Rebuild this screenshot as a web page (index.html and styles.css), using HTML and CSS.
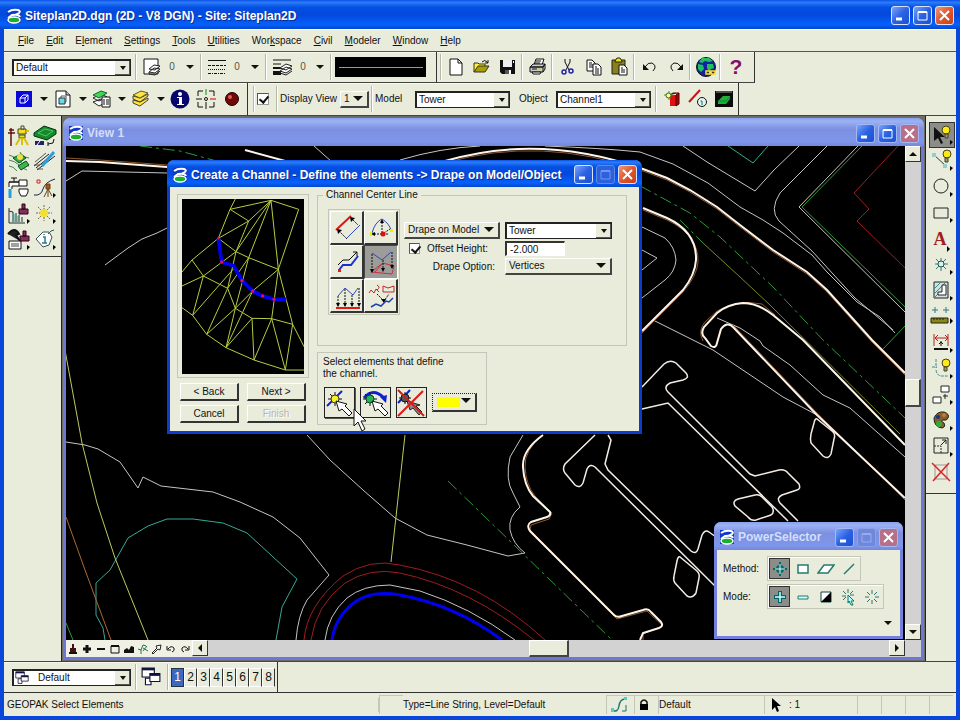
FILE: index.html
```
<!DOCTYPE html>
<html lang="en">
<head>
    <meta charset="UTF-8">
    <meta name="viewport" content="width=device-width, initial-scale=1.0">
    <title>Siteplan2D.dgn (2D - V8 DGN) - Site: Siteplan2D</title>
    <link rel="stylesheet" href="styles.css">
</head>
<body>
    <!-- Shared symbols -->
    <svg class="defs" aria-hidden="true">
        <symbol id="logo" viewBox="0 0 16 16">
            <path d="M1 1h14v14H1z" fill="#1238c8"/>
            <path d="M2 4Q6 1 12 2Q15 3 13 5Q10 7 6 7L2 10M7 7Q13 6 14 9" fill="none" stroke="#fff" stroke-width="2"/>
            <ellipse cx="8" cy="12" rx="6" ry="3" fill="#18b028" stroke="#fff" stroke-width="1.5"/>
        </symbol>
        <symbol id="min" viewBox="0 0 17 17"><path d="M4 12h6" stroke="#fff" stroke-width="3"/></symbol>
        <symbol id="max" viewBox="0 0 17 17"><path d="M4 5h9v8H4z" fill="none" stroke="currentColor"/><path d="M4 5h9" stroke="currentColor" stroke-width="2"/></symbol>
        <symbol id="close" viewBox="0 0 17 17"><path d="M4 4l9 9M13 4l-9 9" stroke="#fff" stroke-width="2"/></symbol>
        <symbol id="sheets" viewBox="0 0 18 18">
            <path d="M1 1h11v8H1z" fill="#fff" stroke="#113"/><path d="M1 2h11" stroke="#114" stroke-width="2"/>
            <path d="M4 10h5v6H4z" fill="#fff" stroke="#113"/>
            <path d="M8 6h9v7H8z" fill="#fff" stroke="#113"/><path d="M8 7h9" stroke="#114" stroke-width="2"/>
        </symbol>
        <symbol id="hand" viewBox="0 0 28 28"><path d="M11 12L14 22L17 20L24 27L27 24L20 17L22 15Z" fill="#fff" stroke="#111"/></symbol>
    </svg>

    <div class="app">
        <header class="titlebar">
            <svg class="logo"><use href="#logo"/></svg>
            <h1>Siteplan2D.dgn (2D - V8 DGN) - Site: Siteplan2D</h1>
            <div class="winbtns">
                <button aria-label="Minimize"><svg><use href="#min"/></svg></button>
                <button aria-label="Maximize"><svg><use href="#max"/></svg></button>
                <button class="close" aria-label="Close"><svg><use href="#close"/></svg></button>
            </div>
        </header>

        <nav class="menubar">
            <button><u>F</u>ile</button>
            <button><u>E</u>dit</button>
            <button>E<u>l</u>ement</button>
            <button><u>S</u>ettings</button>
            <button><u>T</u>ools</button>
            <button><u>U</u>tilities</button>
            <button>Wor<u>k</u>space</button>
            <button><u>C</u>ivil</button>
            <button><u>M</u>odeler</button>
            <button><u>W</u>indow</button>
            <button><u>H</u>elp</button>
        </nav>

        <div class="toolrow">
            <div class="toolbar attributes">
                <span class="combo level"><select aria-label="Active level"><option>Default</option></select></span>
                <i class="sep"></i>
                <button class="drop">
                    <svg width="18" height="18"><path d="M1 1h14v15H1z" fill="#fff" stroke="#111"/><path d="M6 14l5-4 6 1-5 4zM6 11l5-4 6 1-5 4z" fill="#fff" stroke="#222"/><path d="M6 14v2l6 1 5-4" fill="none" stroke="#222"/></svg>
                    <span>0</span><b class="arrow"></b>
                </button>
                <i class="sep"></i>
                <button class="drop">
                    <svg width="18" height="18" stroke="#111"><path d="M0 2.5h18"/><path d="M0 7.5h18" stroke-dasharray="3 1"/><path d="M0 11.5h18" stroke-dasharray="1 1"/><path d="M0 15.5h18" stroke-dasharray="3 1 1 1"/></svg>
                    <span>0</span><b class="arrow"></b>
                </button>
                <i class="sep"></i>
                <button class="drop">
                    <svg width="20" height="18"><path d="M0 2h18M0 6h8" stroke="#111"/><path d="M0 10h8" stroke="#111" stroke-width="2"/><path d="M0 15h8" stroke="#111" stroke-width="4"/><path d="M7 13l6-4 6 2-6 4zM7 10l6-4 6 2-6 4z" fill="#fff" stroke="#222"/><path d="M7 13v2l6 2 6-4" fill="none" stroke="#222"/></svg>
                    <span>0</span><b class="arrow"></b>
                </button>
                <i class="sep"></i>
                <div class="preview"></div>
            </div>
            <div class="toolbar standard">
                <i class="grip"></i>
                <button class="tool" aria-label="New"><svg width="16" height="18"><path d="M2 1h8l4 4v12H2z" fill="#fff" stroke="#111"/><path d="M10 1v4h4" fill="none" stroke="#111"/></svg></button>
                <button class="tool" aria-label="Open"><svg width="18" height="16"><path d="M1 13V4h4l1 1h6v3" fill="#ffee40" stroke="#332"/><path d="M1 13l4-6h11l-4 6z" fill="#a8a000" stroke="#332"/><path d="M9 3q3-3 5 0l1 1M15 1v3h-3" fill="none" stroke="#111"/></svg></button>
                <button class="tool" aria-label="Save"><svg width="18" height="16"><path d="M1 1h15v14H3l-2-2z" fill="#111"/><path d="M4 1h9v7H4z" fill="#eee"/><path d="M6 11h6v4H6z" fill="#555"/><path d="M10 11h2v4h-2z" fill="#fff"/><path d="M14 2h1v2h-1z" fill="#fff"/></svg></button>
                <i class="sep"></i>
                <button class="tool" aria-label="Print"><svg width="18" height="18"><path d="M5 7l2-6h8l-2 6" fill="#fff" stroke="#111"/><path d="M1 9l3-3h12l-2 3zM1 9h13v5H1zM14 9l2-3v5l-2 3" fill="#ccc" stroke="#111"/><path d="M3 14h9l-1 2H4zM7 3h5M6 5h5M3 11h5" stroke="#111" fill="#fff"/><path d="M9 11h3" stroke="#cc0"/></svg></button>
                <i class="sep"></i>
                <button class="tool" aria-label="Cut"><svg width="14" height="18" fill="none"><path d="M4 1v3l4 8M9 1v3l-4 8" stroke="#111"/><circle cx="3" cy="14" r="2" stroke="#22a" stroke-width="1.5"/><circle cx="10" cy="13" r="2" stroke="#22a" stroke-width="1.5"/></svg></button>
                <button class="tool" aria-label="Copy"><svg width="16" height="18"><path d="M1 2h5l3 3v8H1z" fill="#fff" stroke="#111"/><path d="M3 5h3M3 7h4M3 9h4" stroke="#111"/><path d="M7 6h5l3 3v8H7z" fill="#fff" stroke="#111"/><path d="M9 9h2M9 11h4M9 13h4M9 15h4" stroke="#111"/></svg></button>
                <button class="tool" aria-label="Paste"><svg width="18" height="20"><path d="M1 3h13v14H1z" fill="#888020" stroke="#221"/><path d="M4 4l2-3h3l2 3v1H4z" fill="#e8e020" stroke="#221"/><path d="M8 8h5l3 3v7H8z" fill="#fff" stroke="#111"/><path d="M10 11h2M10 13h4M10 15h4" stroke="#111"/></svg></button>
                <i class="sep"></i>
                <button class="tool" aria-label="Undo"><svg width="16" height="14"><path d="M3 7Q6 2 10 3Q14 5 13 8L11 11" fill="none" stroke="#111"/><path d="M1 4v6h6z" fill="#111"/></svg></button>
                <button class="tool" aria-label="Redo"><svg width="16" height="14"><path d="M13 7Q10 2 6 3Q2 5 3 8L5 11" fill="none" stroke="#111"/><path d="M15 4v6H9z" fill="#111"/></svg></button>
                <i class="sep"></i>
                <button class="tool" aria-label="Connect Web"><svg width="22" height="22"><circle cx="11" cy="11" r="9.5" fill="#1420a0" stroke="#112"/><path d="M7 2l7 0 4 3-4 1-4-1-3 2-3-1zM3 8l5 1 1 4-3 3-3-3zM12 8h6l1 4-3 1-2 3-2-4z" fill="#20c060"/><path d="M11 15h4v3h-4zM16 15h4v3h-4zM14 17h3" fill="#333" stroke="#ffe020" stroke-width="1.5"/></svg></button>
                <i class="sep"></i>
                <button class="tool help" aria-label="Help">?</button>
            </div>
        </div>

        <div class="toolrow second">
            <div class="toolbar primary">
                <button class="tool" aria-label="Models"><svg width="18" height="18"><path d="M1 1h16v16H1z" fill="#0808d8"/><path d="M5 8h5v5H5zM8 5h5v5M5 8l3-3M10 8l3-3M10 13l3-3" fill="none" stroke="#fff"/></svg></button><b class="arrow"></b>
                <button class="tool" aria-label="References"><svg width="18" height="20"><path d="M2 2h10l4 4v12H2z" fill="#fff" stroke="#111"/><path d="M12 2v4h4" fill="#ccc" stroke="#111"/><path d="M7 7h5v6H7z" fill="#fff" stroke="#555"/><path d="M5 9h6v6H5z" fill="#60e0e0" stroke="#333"/></svg></button><b class="arrow"></b>
                <button class="tool" aria-label="Level Manager"><svg width="22" height="20"><path d="M2 13l8-3 6 3-8 4zM2 9l8-4 6 3-8 4z" fill="#fff" stroke="#222"/><path d="M2 6l8-4 6 2-8 5z" fill="#40d850" stroke="#163"/><path d="M11 8h8v10h-8z" fill="#fff" stroke="#111"/><path d="M12 11h2M15 11h3M12 13h2M15 13h3M12 15h2M15 15h3" stroke="#111"/></svg></button><b class="arrow"></b>
                <button class="tool" aria-label="Level Display"><svg width="18" height="20"><path d="M1 14l7 3 8-6v-2l-8 4-7-2zM1 10l7 3 8-6V5l-8 4-7-2z" fill="#ffe440" stroke="#443"/><path d="M1 6l8-4 7 2-8 5z" fill="#ffe440" stroke="#553"/></svg></button><b class="arrow"></b>
                <button class="tool" aria-label="Element Information"><svg width="22" height="22"><circle cx="11" cy="11" r="9.5" fill="#08086c"/><path d="M8 9h5v7h2v1H8v-1h2v-6H8V9z" fill="#fff"/><circle cx="11" cy="6" r="2" fill="#fff"/></svg></button>
                <button class="tool" aria-label="AccuDraw"><svg width="22" height="22" fill="none" stroke="#111"><path d="M3 8V3h5M14 3h5v5M19 14v5h-5M8 19H3v-5"/><path d="M11 14v7M1 11h6"/><path d="M11 1v6" stroke="#181"/><path d="M15 11h6" stroke="#c00"/><circle cx="11" cy="11" r="1.5"/></svg></button>
                <button class="tool" aria-label="Record"><svg width="16" height="16"><circle cx="8" cy="8" r="6.5" fill="#700808" stroke="#200"/><circle cx="6" cy="6" r="2" fill="#e06050"/></svg></button>
            </div>
            <div class="toolbar object">
                <i class="grip"></i>
                <input type="checkbox" id="display" class="check" checked>
                <i class="sep"></i>
                <label for="display">Display View</label>
                <span class="menu viewno"><select aria-label="View number"><option>1</option></select></span>
                <i class="sep"></i>
                <label for="model" class="model-label">Model</label>
                <span class="combo short"><select id="model"><option>Tower</option></select></span>
                <label for="object" class="object-label">Object</label>
                <span class="combo short"><select id="object"><option>Channel1</option></select></span>
                <i class="sep"></i>
                <button class="tool" aria-label="Edit object"><svg width="18" height="18"><path d="M7 5h6v11H7z" fill="#e01010"/><path d="M13 5l3-2v11l-3 2zM7 5l3-2h6" fill="#a00808" stroke="#500"/><path d="M6 1v9M1 5h9" stroke="#585"/><circle cx="5.5" cy="5.5" r="2.5" fill="#ff6" stroke="#363"/></svg></button>
                <button class="tool" aria-label="Line information"><svg width="20" height="20"><path d="M1 13L12 1" stroke="#c01818" stroke-width="2"/><circle cx="14" cy="13" r="4.5" fill="#e4f4ee" stroke="#111"/><path d="M12.5 12H14v4" fill="none" stroke="#176"/></svg></button>
                <button class="tool" aria-label="Triangles"><svg width="18" height="18"><path d="M0 1h18v16H0z" fill="#0a0a0a"/><path d="M1 2h16" stroke="#999"/><path d="M3 11l5-5h7v3l-4 5H3z" fill="#20b030"/><path d="M3 11h8l4-4" fill="none" stroke="#084"/></svg></button>
            </div>
        </div>

        <main>
            <aside class="toolbox left">
                <button class="tool" aria-label="Survey"><svg width="22" height="22"><path d="M3 3v18M1 5h5M0 8h7" stroke="#611" stroke-width="1.5"/><path d="M10 4h8v5h-8zM11 10h6v3h-6z" fill="#f0e020" stroke="#442"/><path d="M13 1h3v3h-3z" fill="#eee" stroke="#442"/><path d="M14 13v7M12 13l-4 7M16 13l4 7M18 6h3" stroke="#d8c010" stroke-width="2"/></svg></button>
                <button class="tool" aria-label="DTM"><svg width="24" height="24"><path d="M1 9L11 2l12 4v4l-9 6L1 12z" fill="#18882c" stroke="#031"/><path d="M5 9l7-4 8 2-7 5z" fill="none" stroke="#4c6" /><path d="M2 17h9v4H2z" fill="#226"/><path d="M4 21l3-4" stroke="#fff"/><path d="M15 20l5-1 1-4M15 18v4" fill="none" stroke="#111"/></svg></button>
                <button class="tool" aria-label="Site"><svg width="22" height="22"><path d="M1 4q5 1 10 6t10 5M1 9q6 1 10 5t8 5M1 15q4 0 8 5M12 1q2 5 9 6" fill="none" stroke="#485"/><path d="M5 7l8-4 5 4-7 5z" fill="#30b040" stroke="#142"/><path d="M10 15l8-5 3 4-8 5z" fill="#38b848" stroke="#142"/><circle cx="12" cy="6" r="3" fill="#f0e048"/></svg></button>
                <button class="tool" aria-label="Road"><svg width="24" height="24"><path d="M1 16L16 4M4 20L22 6M3 18L20 4" stroke="#222"/><path d="M9 16L21 2" stroke="#28a0e0" stroke-width="3"/><path d="M2 12L13 3M1 15h6M4 19h6" stroke="#555"/></svg></button>
                <button class="tool" aria-label="Water"><svg width="24" height="24"><path d="M2 11V6h10v-2h8v6h-8M4 2h6M7 2v4M2 6h10v4H5v3" fill="#fff" stroke="#111"/><path d="M3 13v9" stroke="#20a0e0" stroke-width="3"/><path d="M12 13h9v3l-2 4h-5l-2-4z" fill="#fff" stroke="#111"/></svg></button>
                <button class="tool" aria-label="Geometry"><svg width="24" height="24"><path d="M1 19q7 1 9-6t12-10" fill="none" stroke="#224"/><path d="M4 4h3v3H4z" fill="none" stroke="#c22"/><path d="M13 8h4v5h-4zM15 13v8M15 13l-4 8M15 13l4 7" fill="#a50" stroke="#642"/><path d="M20 17l3 2-3 3z"/></svg></button>
                <button class="tool" aria-label="Quantities"><svg width="24" height="24"><path d="M2 6v15h16M2 9l4 1v10M9 11v9M12 13v7M15 15v5" fill="none" stroke="#233"/><path d="M7 12v8M11 14v6" stroke="#2aa"/><path d="M15 2h3v5h-3zM12 7h9v5h-9z" fill="#803060" stroke="#301"/><path d="M20 17l3 2-3 3z"/></svg></button>
                <button class="tool" aria-label="Flash"><svg width="24" height="24"><path d="M11 3v16M3 11h16M5 5l12 12M17 5L5 17" stroke="#764" stroke-dasharray="2 1"/><circle cx="11" cy="11" r="4" fill="#f0e030"/><path d="M20 17l3 2-3 3z"/></svg></button>
                <button class="tool" aria-label="Build"><svg width="24" height="24"><path d="M1 6q7-8 11 0l-3 1 4 6" fill="#222" stroke="#111" stroke-width="2"/><path d="M2 13h12v8H2z" fill="#fff" stroke="#111"/><path d="M4 16h8M4 18h8" stroke="#444"/><path d="M16 3h3v5h-3zM13 8h9v5h-9z" fill="#803060" stroke="#301"/><path d="M20 17l3 2-3 3z"/></svg></button>
                <button class="tool" aria-label="Tag"><svg width="24" height="24"><path d="M3 11l7-7h6l3 5-3 8-6 2z" fill="#fff" stroke="#355"/><path d="M15 6q3-4 6-4" fill="none" stroke="#355"/><path d="M10 9h2v6M9 15h5M11 6v1" fill="none" stroke="#2a7a90" stroke-width="1.5"/><path d="M20 17l3 2-3 3z"/></svg></button>
            </aside>

            <div class="workspace">
                <section class="view">
                    <header class="titlebar inactive">
                        <svg class="logo"><use href="#logo"/></svg>
                        <h2>View 1</h2>
                        <div class="winbtns">
                            <button aria-label="Minimize"><svg><use href="#min"/></svg></button>
                            <button aria-label="Maximize"><svg><use href="#max"/></svg></button>
                            <button class="close" aria-label="Close"><svg><use href="#close"/></svg></button>
                        </div>
                    </header>
                    <div class="drawing">
                        <svg viewBox="66 146 839 494" preserveAspectRatio="xMinYMin slice">
                            <!-- contours -->
                            <g class="white">
                                <path d="M66 181L82 171L167 173"/>
                                <path d="M105 265L128 248L142 239L157 233L167 228"/>
                                <path d="M314 146L332 162"/>
                                <path d="M400 160Q440 148 480 146M545 146Q600 148 640 152L673 164L708 183L740 207L763 220L783 233L812 255L827 272L857 302L880 317L895 333"/>
                                <path d="M683 146L707 162L755 191L774 170L799 146"/>
                                <path d="M827 146L780 193Q769 210 779 221L812 251L855 298L893 330"/>
                                <path d="M858 146L799 207L905 312"/>
                                <path d="M642 227L665 238Q675 247 676 260Q675 272 665 280L642 298"/>
                                <path d="M642 250L657 258L642 270"/>
                                <path d="M653 320L713 350L783 397L817 415"/>
                                <path d="M717 318L740 328L760 341L763 346L790 365L823 395L850 408L905 457"/>
                                <path d="M523 435L510 457Q505 480 513 493L520 507Q508 517 510 530Q513 544 525 553L508 556L467 545L427 535L395 518L363 490L330 460L307 435"/>
                                <path d="M66 442L85 445L98 449L120 462L138 488L143 477L161 486L213 492L240 502L273 517L300 538L329 575L307 600Q298 615 296 640"/>
                                <path d="M325 640Q328 615 347 598Q363 585 390 585L420 591Q470 607 515 640"/>
                            </g>
                            <g class="teal">
                                <path d="M728 146L753 163L768 146"/>
                                <path d="M105 640L103 628L96 615V583L110 570L128 538L148 526L167 519H193L223 523L247 533L297 579L282 607L276 640"/>
                            </g>
                            <g class="green">
                                <path d="M862 146L802 207L905 307M905 326L883 349M66 623L73 640"/>
                                <path class="dash" d="M140 146L180 151L220 162M448 481L612 640"/>
                                <path class="dash" d="M620 175L690 213L720 237L773 287L823 340L905 418"/>
                                <path class="dash" d="M680 220L703 243"/>
                            </g>
                            <path class="red" d="M898 146L854 193L869 209L857 221L905 268"/>
                            <path class="red" d="M304 640Q307 605 343 576Q370 558 400 565Q480 580 545 640M311 640Q316 605 345 583Q370 567 400 573Q470 588 534 640"/>
                            <path class="olive" d="M703 243L740 277L770 305L900 434"/>
                            <path class="yellow" d="M65 350L82 443L97 503L115 558L148 640M405 435L391 562"/>
                            <path class="orange" d="M66 517L85 570L111 640"/>
                            <path class="blue" d="M332 640Q335 617 355 602Q372 590 400 595Q455 605 502 640"/>
                            <!-- road edges -->
                            <g class="brown">
                                <path d="M66 158L100 160L167 165L290 163"/>
                                <path d="M445 163Q540 135 643 171L667 180L690 192L717 209L740 227L773 252L807 274L827 292L872 342L905 375"/>
                                <path d="M643 210L667 220Q699 235 698 262Q697 276 683 292L642 333"/>
                                <path d="M703 341Q697 330 706 321L717 311Q737 299 762 304L775 315"/>
                                <path d="M543 435Q524 450 525 467Q526 485 535 496L552 513L549 519L531 525L530 530L617 619L647 611L663 626L643 634V640"/>
                                <path d="M733 325L817 413L905 500"/>
                            </g>
                            <g class="road">
                                <path d="M66 161L100 162L167 167M245 150L300 165"/>
                                <path d="M445 161Q540 133 643 169L667 178L690 190L717 207L740 225L773 250L807 272L827 290L872 340L905 373"/>
                                <path d="M643 208L667 218Q697 232 696 260Q695 275 683 290L642 331"/>
                                <path d="M905 445L803 340L773 315Q758 303 743 303Q728 304 717 313L704 327Q700 334 705 338L711 346Q716 349 717 343L721 329Q727 321 733 327L817 415L905 498"/>
                                <path d="M543 435Q522 450 523 467Q524 485 533 496L550 512Q551 516 547 517L531 522Q526 525 530 531L614 615Q617 618 622 616L643 610Q648 608 651 612L661 622Q664 626 659 628L643 633L640 640"/>
                            </g>
                            <!-- buildings -->
                            <g class="building">
                                <path d="M642 387L664 364Q670 359 676 363L686 373Q690 378 683 380L670 383Q663 387 668 392L750 474L755 476L779 470Q785 469 788 473L799 484Q801 489 797 490L782 495Q776 498 780 503L798 521"/>
                                <path d="M642 409L668 403L788 521"/>
                                <path d="M817 419L832 431Q836 434 834 439L831 454Q828 460 823 456L811 443Q810 439 811 434L814 423Q815 418 817 419Z"/>
                                <path d="M738 499L755 495Q759 494 762 497L772 507Q775 512 771 515L756 520Q751 521 748 517L735 506Q732 501 738 499Z"/>
                                <path d="M680 557L697 571Q700 574 699 578L696 593Q692 599 687 596L675 583Q673 580 674 576L677 561Q678 556 680 557Z"/>
                                <path d="M595 435L565 464Q562 469 565 473L575 485Q580 489 583 483L587 469Q590 463 595 467L715 586"/>
                                <path d="M608 435L611 440L605 464L608 470L691 551Q696 555 698 549L702 535Q705 529 709 532L716 537"/>
                            </g>
                        </svg>
                    </div>
                    <div class="vscroll">
                        <button class="sb up" aria-label="Scroll up"></button>
                        <i class="thumb"></i>
                        <button class="sb down" aria-label="Scroll down"></button>
                    </div>
                    <div class="hscroll">
                        <div class="viewtools">
                            <button aria-label="Update view"><svg width="12" height="12"><path d="M5 1h2v4h2v6H3V5h2z" fill="#411"/><path d="M2 10h8" stroke="#111" stroke-width="2"/></svg></button>
                            <button aria-label="Zoom in"><svg width="12" height="12"><path d="M6 2v8M2 6h8" stroke="#111" stroke-width="3"/></svg></button>
                            <button aria-label="Zoom out"><svg width="12" height="12"><path d="M2 6h8" stroke="#111" stroke-width="2"/></svg></button>
                            <button aria-label="Window area"><svg width="12" height="12"><path d="M2 3h8v7H2z" fill="none" stroke="#111"/><path d="M2 3h8" stroke="#111" stroke-width="2"/></svg></button>
                            <button aria-label="Fit view"><svg width="12" height="12"><path d="M1 10V7l3-2 2 2 2-4 3 1v6z" fill="#111"/></svg></button>
                            <button aria-label="Rotate view"><svg width="12" height="12"><path d="M1 6l3 1v4M4 7l2-5 3 1M6 8l4-5M6 5l5 3" fill="none" stroke="#187858"/></svg></button>
                            <button aria-label="Pan view"><svg width="12" height="12"><path d="M1 10l5-5-1-2 5-1-1 5-2-1-5 5z" fill="#fff" stroke="#222"/></svg></button>
                            <button aria-label="View previous"><svg width="12" height="12"><path d="M3 6q3-4 6-1 1 3-2 4M2 3v4h4" fill="none" stroke="#111"/></svg></button>
                            <button aria-label="View next"><svg width="12" height="12"><path d="M9 6Q6 2 3 5 2 8 5 9M10 3v4H6" fill="none" stroke="#111"/></svg></button>
                        </div>
                        <button class="sb prev" aria-label="Scroll left"></button>
                        <i class="thumb"></i>
                        <button class="sb next" aria-label="Scroll right"></button>
                    </div>
                </section>

                <section class="window channel">
                    <header class="titlebar">
                        <svg class="logo"><use href="#logo"/></svg>
                        <h2>Create a Channel - Define the elements -&gt; Drape on Model/Object</h2>
                        <div class="winbtns">
                            <button aria-label="Minimize"><svg><use href="#min"/></svg></button>
                            <button class="off" aria-label="Maximize" disabled><svg><use href="#max"/></svg></button>
                            <button class="close" aria-label="Close"><svg><use href="#close"/></svg></button>
                        </div>
                    </header>
                    <div class="channel-body">
                        <div class="wizard">
                            <div class="frame">
                                <svg viewBox="48 129 366 525">
                                    <g fill="none" stroke="#b8cc40" stroke-width="3">
                                        <path d="M208 129L192 160L157 247L78 312L48 348M192 160L315 133L398 160L337 340L315 133M192 160L248 195L157 247L210 287L248 195L315 133L210 287M315 133L248 305L210 287L112 360L78 312M112 360L48 390M112 360L80 478L48 455M80 478L122 535L180 575L264 612L358 642H414"/>
                                        <path d="M157 247L167 318M248 305L337 340L260 405L180 575M337 340L317 488L380 505L337 340M380 505L414 572M380 505L358 642L317 488L264 612L258 487L317 488M258 487L208 457L185 397L112 360M210 287L185 397L122 535L208 457L260 405M248 305L185 397M258 487L180 575M208 457L180 575M248 305L208 457M80 478L210 330"/>
                                    </g>
                                    <path d="M157 247L167 318L203 329L228 374L260 405L290 420L324 430H361" fill="none" stroke="#0000f0" stroke-width="11"/>
                                    <g fill="#e01040"><circle cx="157" cy="247" r="4"/><circle cx="167" cy="318" r="5"/><circle cx="228" cy="374" r="5"/><circle cx="260" cy="405" r="5"/><circle cx="290" cy="420" r="5"/><circle cx="324" cy="430" r="5"/></g>
                                </svg>
                            </div>
                            <div class="nav">
                                <button class="push">&lt; Back</button>
                                <button class="push">Next &gt;</button>
                                <button class="push">Cancel</button>
                                <button class="push" disabled>Finish</button>
                            </div>
                        </div>
                        <div class="options">
                            <fieldset class="centerline">
                                <legend>Channel Center Line</legend>
                                <div class="methods">
                                    <button aria-label="Parallel"><svg width="28" height="28"><path d="M3 16L18 2" stroke="#d81818" stroke-width="2"/><path d="M13 25L27 11" stroke="#3048c0"/><path d="M6 17l8 8M18 4l7 7" stroke="#111" stroke-dasharray="2 1"/><path d="M4 15l5 1-4 4zM17 3l5 1-4 4z"/></svg></button>
                                    <button aria-label="Arc"><svg width="28" height="28"><path d="M5 19Q8 8 15 5Q22 9 25 18" fill="none" stroke="#3048c0"/><path d="M15 8v12M7 20h14M17 19l6-4" stroke="#111" stroke-dasharray="2 1"/><path d="M13 9l2-4 2 4zM8 18v4l-4-2z"/><path d="M3 18h2v4H3zM23 15h3v3h-3z" fill="#ee0"/><circle cx="16" cy="20" r="2.5" fill="#e01010"/></svg></button>
                                    <button aria-label="Offset"><svg width="28" height="28"><path d="M6 22l4-5h8l7-9" fill="none" stroke="#1830d0" stroke-width="2"/><path d="M5 17l5-5h6l8-8M20 4h4v4" fill="none" stroke="#111"/><path d="M5 21h3v3H5z" fill="#c22"/></svg></button>
                                    <button class="on" aria-label="Drape"><svg width="28" height="28"><path d="M5 5l10 7 9-8" fill="none" stroke="#3048c0"/><path d="M4 24l12-9 11 3-2 8zM15 16l-7 8" fill="none" stroke="#c83048"/><path d="M5 6v17M16 12v10M25 4v16" stroke="#111" stroke-dasharray="2 1"/><path d="M3 21h4l-2 4zM14 20h4l-2 4zM23 17h4l-2 4z"/></svg></button>
                                    <button aria-label="Constant"><svg width="28" height="28"><path d="M5 14l7-8 8 7 5-7" fill="none" stroke="#3048c0"/><path d="M5 14v10M12 7v17M19 13v11M26 6v18" stroke="#111" stroke-dasharray="2 1"/><path d="M3 21h4l-2 4zM10 21h4l-2 4zM17 21h4l-2 4zM24 21h4l-2 4z"/><path d="M3 26h24" stroke="#e01818" stroke-width="2"/></svg></button>
                                    <button aria-label="Profile"><svg width="28" height="28"><path d="M2 11l2-3 3 3 2-4 3 3M16 10V4l5 2 6-2v6zM10 3q4 2 0 5" fill="none" stroke="#c02828"/><path d="M10 12l7 7 5-7" fill="none" stroke="#111" stroke-dasharray="2 1"/><path d="M14 17h5l-2 4z"/><path d="M4 25l5-3 5 2 5-5 3 1 4-4" fill="none" stroke="#1840b0" stroke-width="1.5"/></svg></button>
                                </div>
                                <div class="fields">
                                    <span class="menu drape"><select aria-label="Drape on"><option>Drape on Model</option></select></span>
                                    <span class="combo"><select aria-label="Model name"><option>Tower</option></select></span>
                                    <label class="offset"><input type="checkbox" class="check small" checked>Offset Height:</label>
                                    <input type="text" class="text" aria-label="Offset height" value="-2.000">
                                    <label class="end" for="option">Drape Option:</label>
                                    <span class="menu"><select id="option"><option>Vertices</option></select></span>
                                </div>
                            </fieldset>
                            <div class="selectbox">
                                <p>Select elements that define<br>the channel.</p>
                                <div class="pickers">
                                    <button class="pick raised" aria-label="Select elements"><svg width="28" height="28"><path d="M2 17L17 2" stroke="#1020d0" stroke-width="2"/><path d="M10 3v14M3 10h14M5 5l10 10" stroke="#111"/><circle cx="10" cy="10" r="4" fill="#f8f020" stroke="#332"/><use href="#hand"/></svg></button>
                                    <button class="pick" aria-label="Edit path"><svg width="28" height="28"><path d="M3 9Q12-2 23 9" fill="none" stroke="#1020d0" stroke-width="3"/><path d="M19 8l7-2-1 8z" fill="#1020d0"/><path d="M9 3v14M2 10h14M4 5l10 10M4 15l4-4" stroke="#111"/><circle cx="9" cy="10" r="4" fill="#20b850" stroke="#142"/><use href="#hand"/></svg></button>
                                    <button class="pick" aria-label="Clear selection"><svg width="28" height="28"><path d="M1 14L13 1" stroke="#1020d0" stroke-width="2"/><path d="M8 3v12M2 9h12" stroke="#111"/><circle cx="8" cy="9" r="4" fill="#555" stroke="#111"/><path d="M10 12l3 9 3-2 6 7 3-3-6-6 4-1z" fill="#888" stroke="#222"/><path d="M1 1l26 26M26 2L1 27" stroke="#e01818" stroke-width="2"/></svg></button>
                                    <span class="menu color"><i></i><select aria-label="Highlight color"><option>Yellow</option></select></span>
                                </div>
                            </div>
                        </div>
                    </div>
                    <svg class="pointer" width="14" height="24"><path d="M1 1v17l4-4 4 9 3-2-4-8h5z" fill="#fff" stroke="#111"/></svg>
                </section>

                <section class="window selector">
                    <header class="titlebar inactive">
                        <svg class="logo"><use href="#logo"/></svg>
                        <h2>PowerSelector</h2>
                        <div class="winbtns">
                            <button aria-label="Minimize"><svg><use href="#min"/></svg></button>
                            <button class="off" aria-label="Maximize" disabled><svg><use href="#max"/></svg></button>
                            <button class="close" aria-label="Close"><svg><use href="#close"/></svg></button>
                        </div>
                    </header>
                    <div class="selector-body">
                        <span>Method:</span>
                        <div class="group">
                            <button class="on" aria-label="Individual"><svg width="18" height="18"><circle cx="9" cy="9" r="3" fill="none" stroke="#066" stroke-width="2"/><path d="M9 2v14M2 9h14" stroke="#066" stroke-width="2"/><path d="M9 4v10M4 9h10" stroke="#dff"/></svg></button>
                            <button aria-label="Block"><svg width="18" height="18"><path d="M4 5h10v8H4z" fill="#fff" stroke="#287870" stroke-width="1.5"/></svg></button>
                            <button aria-label="Shape"><svg width="18" height="18"><path d="M1 13l6-8h10l-6 8z" fill="#fff" stroke="#287870" stroke-width="1.5"/></svg></button>
                            <button aria-label="Line"><svg width="18" height="18"><path d="M4 14L14 4" stroke="#287870" stroke-width="1.5"/></svg></button>
                        </div>
                        <span>Mode:</span>
                        <div class="group">
                            <button class="on" aria-label="Add"><svg width="18" height="18"><path d="M9 3v12M3 9h12" stroke="#066" stroke-width="4"/><path d="M9 4v10M4 9h10" stroke="#cff" stroke-width="1.5"/></svg></button>
                            <button aria-label="Subtract"><svg width="18" height="18"><path d="M4 8h10v3H4z" fill="#cff" stroke="#287870"/></svg></button>
                            <button aria-label="Invert"><svg width="18" height="18"><path d="M4 4h10v10H4z" fill="#fff" stroke="#144"/><path d="M14 4v10H4z"/></svg></button>
                            <button aria-label="New selection"><svg width="18" height="18"><path d="M8 1v4M2 8h4M3 3l3 3M13 3l-3 3M3 12l3-3M10 7h4" stroke="#287870"/><path d="M8 7l6 6-3 0 2 4-2 0-2-4-1 2z" fill="#bff" stroke="#176"/></svg></button>
                            <button aria-label="Select all"><svg width="18" height="18"><path d="M9 2v4M9 12v4M2 9h4M12 9h4M4 4l3 3M14 4l-3 3M4 14l3-3M14 14l-3-3" stroke="#287870"/></svg></button>
                        </div>
                        <button class="expand" aria-label="Show details"><b class="arrow"></b></button>
                    </div>
                </section>
            </div>

            <aside class="toolbox right">
                <button class="tool on" aria-label="Element selection"><svg width="24" height="24"><path d="M4 4v14l4-3 3 6 2-1-3-6h5z" fill="#111"/><circle cx="16" cy="7" r="4" fill="#ffe818" stroke="#441"/><path d="M15 11h3v4h-3z" fill="#998" stroke="#441"/><path d="M20 17l3 2-3 3z"/></svg></button>
                <button class="tool" aria-label="Linear"><svg width="24" height="24"><path d="M4 6l12 11" stroke="#244"/><path d="M2 4h4v4H2zM13 15h4v4h-4z" fill="#9cc"/><circle cx="17" cy="5" r="4" fill="#ffe818" stroke="#441"/><path d="M15 9h3v4h-3z" fill="#998" stroke="#441"/><path d="M20 17l3 2-3 3z"/></svg></button>
                <button class="tool" aria-label="Ellipses"><svg width="24" height="24"><circle cx="11" cy="11" r="7" fill="none" stroke="#222"/><path d="M20 17l3 2-3 3z"/></svg></button>
                <button class="tool" aria-label="Polygons"><svg width="24" height="24"><path d="M4 7h14v10H4z" fill="none" stroke="#222"/><path d="M20 17l3 2-3 3z"/></svg></button>
                <button class="tool letter" aria-label="Text">A<svg width="4" height="6"><path d="M0 0l3 3-3 3z"/></svg></button>
                <button class="tool" aria-label="Cells"><svg width="24" height="24"><path d="M11 5v13M5 11h13M6 6l10 10M16 6L6 16" stroke="#387878"/><circle cx="11" cy="11" r="3" fill="#dee" stroke="#255"/><path d="M20 17l3 2-3 3z"/></svg></button>
                <button class="tool" aria-label="Patterns"><svg width="24" height="24"><path d="M4 3h14v16H4z" fill="#cde4e0" stroke="#222"/><path d="M4 10l7-7M4 15L16 3M4 19l5-5" stroke="#488"/><path d="M12 6h4v10H8v-3h4z" fill="#fff" stroke="#222"/><path d="M20 17l3 2-3 3z"/></svg></button>
                <button class="tool" aria-label="Measure"><svg width="24" height="24"><path d="M5 2v6M2 5h6M16 2v6M13 5h6" stroke="#288080"/><path d="M1 13h17v5H1z" fill="#888818" stroke="#221"/><path d="M4 13v2M7 13v2M10 13v2M13 13v2" stroke="#221"/><path d="M20 13l3 3-3 3z"/></svg></button>
                <button class="tool" aria-label="Dimensions"><svg width="24" height="24"><path d="M4 3v12M18 3v12M5 7h13M8 4L5 7l3 3M15 4l3 3-3 3" fill="none" stroke="#b82020"/><path d="M4 18h14" stroke="#111" stroke-width="2"/><path d="M11 10v5M9 13l2-2 2 2" fill="none" stroke="#111"/><path d="M20 17l3 2-3 3z"/></svg></button>
                <button class="tool" aria-label="Change attributes"><svg width="24" height="24"><path d="M6 2v9M2 10h5M6 13q1 6 6 6h6" fill="none" stroke="#488" stroke-dasharray="3 1"/><circle cx="16" cy="6" r="4" fill="#ffe818" stroke="#441"/><path d="M14 10h3v4h-3z" fill="#998" stroke="#441"/><path d="M20 17l3 2-3 3z"/></svg></button>
                <button class="tool" aria-label="Groups"><svg width="24" height="24"><path d="M11 3h8v6h-8zM3 14h8v6H3z" fill="#fff" stroke="#222"/><path d="M15 11v5M13 13h5" stroke="#222"/><path d="M20 17l3 2-3 3z"/></svg></button>
                <button class="tool" aria-label="Change color"><svg width="24" height="24"><path d="M4 9Q7 2 14 3Q20 5 18 9Q17 12 13 11Q10 12 14 14Q16 18 12 19Q4 18 4 9Z" fill="#806030" stroke="#221"/><circle cx="8" cy="8" r="2" fill="#138"/><circle cx="14" cy="6" r="2" fill="#c73"/><circle cx="9" cy="15" r="3" fill="#3a3"/><path d="M20 17l3 2-3 3z"/></svg></button>
                <button class="tool" aria-label="Modify"><svg width="24" height="24"><path d="M4 3h14v15H4z" fill="none" stroke="#222"/><path d="M4 11h7v7" fill="none" stroke="#222" stroke-dasharray="2 1"/><path d="M11 10l5-5M12 5h4v4" fill="none" stroke="#222"/><path d="M20 17l3 2-3 3z"/></svg></button>
                <button class="tool" aria-label="Delete"><svg width="24" height="24"><path d="M5 4h12v14H5z" fill="none" stroke="#999"/><path d="M2 2l18 18M19 2L3 20" stroke="#e02020" stroke-width="1.5"/></svg></button>
            </aside>
        </main>

        <div class="toolrow groups">
            <div class="toolbar viewgroups">
                <span class="combo level"><svg><use href="#sheets"/></svg><select aria-label="View group"><option>Default</option></select></span>
                <i class="sep"></i>
                <button class="tool manage" aria-label="Manage view groups"><svg width="20" height="20"><use href="#sheets"/></svg></button>
                <i class="sep"></i>
                <div class="views">
                    <button class="on">1</button>
                    <button>2</button>
                    <button>3</button>
                    <button>4</button>
                    <button>5</button>
                    <button>6</button>
                    <button>7</button>
                    <button>8</button>
                </div>
            </div>
        </div>

        <footer class="status">
            <span class="message">GEOPAK Select Elements</span>
            <span class="cell"></span>
            <span class="info">Type=Line String, Level=Default</span>
            <span class="cell snap"><svg width="18" height="18"><path d="M2 14q6 3 7-4t6-7" fill="none" stroke="#287870" stroke-width="1.5"/><path d="M1 12h3v4H1zM14 1h3v3h-3z" fill="#5cc"/><path d="M12 15h4V9" fill="none" stroke="#176"/></svg></span>
            <span class="cell lock"><svg width="12" height="14"><path d="M3 7V4q3-4 6 0v3" fill="none" stroke="#111" stroke-width="1.5"/><path d="M2 6h8v6H2z"/></svg></span>
            <span class="cell active">Default</span>
            <span class="cell count"><svg width="10" height="16"><path d="M1 1v12l3-3 2 5 2-1-2-5h4z"/></svg>: 1</span>
            <span class="cell"></span>
            <span class="cell"></span>
            <span class="cell"></span>
            <span class="cell"></span>
        </footer>
    </div>
</body>
</html>
```
FILE: styles.css
```
* { box-sizing: border-box; }
body { margin: 0; background: #e9ebdb; color: #111; font-family: "Liberation Sans", Arial, sans-serif; font-size: 10px; line-height: 14px; }
button, select, input { font: inherit; color: inherit; margin: 0; }
button { padding: 0; border: 0; background: none; }
svg { display: block; flex: none; }
h1, h2, p { margin: 0; }
.defs { position: absolute; width: 0; height: 0; }

.app { display: flex; flex-direction: column; min-height: 100vh; border: 4px solid #0a46dc; border-top: 0; background: #e9ebdb; }

/* Title bars */
.titlebar { display: flex; align-items: center; gap: 3px; height: 29px; margin: 0 -4px; padding: 2px 6px 0; background: linear-gradient(#0c50e8, #2a7cf8 8%, #0450e4 25%, #0448dc 50%, #0660fc 85%, #0348c8); color: #fff; flex: none; }
.titlebar h1, .titlebar h2 { flex: 1; font-size: 12px; line-height: 16px; white-space: nowrap; text-shadow: 1px 1px #0a2c90; }
.titlebar .logo { width: 16px; height: 16px; }
.inactive { background: linear-gradient(#8aa2f0, #9cb2f4 12%, #7c90e0 40%, #7e96ea 85%, #7488dc); }
.inactive h2 { color: #d4defa; text-shadow: none; }
.winbtns { display: flex; gap: 3px; }
.winbtns button { width: 19px; height: 19px; border: 1px solid #d8e4fc; border-radius: 3px; background: linear-gradient(135deg, #7ca4f8, #2a62e4 50%, #1c50d0); color: #fff; }
.winbtns svg { width: 17px; height: 17px; }
.winbtns .close { background: linear-gradient(135deg, #f09878, #e0562c 50%, #c84018); }
.winbtns .off { border-color: #5a88ec; color: #6c98f0; background: #2c60dc; }
.inactive .winbtns button { border-color: #a4b8f4; }
.inactive .winbtns .close { background: #b87088; }
.inactive .winbtns .off { background: #7088dc; color: #98acec; border-color: #8ca0e8; }

/* Menus and toolbars */
.menubar { display: flex; gap: 12px; height: 23px; padding-left: 14px; border-bottom: 1px solid #555; border-top: 1px solid #fff; flex: none; }
.toolrow { display: flex; height: 31px; flex: none; }
.toolbar { display: flex; align-items: center; height: 31px; border-right: 1px solid #333; border-bottom: 1px solid #444; box-shadow: inset 0 1px #f8f8f0; }
.second { height: 33px; border-bottom: 1px solid #444; }
.second .toolbar { height: 32px; border-bottom: 0; }
.sep { width: 4px; height: 26px; border-left: 1px solid #b4b6a8; border-right: 1px solid transparent; box-shadow: inset 1px 0 #fff; flex: none; }
.grip { width: 3px; height: 26px; border-left: 1px solid #b4b6a8; box-shadow: inset 1px 0 #fff; flex: none; }
.tool { display: flex; align-items: center; justify-content: center; width: 26px; height: 26px; flex: none; }
.arrow { width: 13px; display: flex; justify-content: center; flex: none; }
.arrow::after { content: ""; border: 4px solid transparent; border-top-color: #111; border-bottom: 0; }
.help { font: bold 21px/24px "Liberation Sans", sans-serif; color: #80106c; }

.attributes { padding-left: 8px; width: 433px; }
.attributes .sep { margin-left: 4px; }
.drop { display: flex; align-items: center; justify-content: space-between; width: 57px; padding: 0 0 0 4px; color: #554; flex: none; }
.preview { width: 91px; height: 20px; margin-left: 1px; background: linear-gradient(#999, #999) center / 84px 1px no-repeat #000; flex: none; }
.standard { padding-left: 3px; padding-right: 3px; width: 318px; }
.primary { padding-left: 7px; width: 244px; }
.object { padding-left: 5px; width: 491px; }
.object .check { margin: 0 7px 0 1px; }
.object label { width: 60px; white-space: nowrap; flex: none; }
.object .model-label { width: 40px; }
.object .object-label { width: 37px; margin-left: 9px; }
.object .combo + .sep { margin-left: 4px; }

/* Form controls */
.combo, .menu { position: relative; display: block; flex: none; }
.combo select, .menu select { display: block; width: 100%; height: 17px; padding: 0 16px 0 2px; appearance: none; border: 1px solid #222; border-radius: 0; background: #fff; outline: 0; }
.combo select { border-top-width: 2px; border-left-width: 2px; }
.combo::before { content: ""; position: absolute; z-index: 1; right: 1px; top: 2px; width: 14px; bottom: 1px; background: #e9ebdb; border-right: 1px solid #555; border-bottom: 1px solid #555; pointer-events: none; }
.combo::after, .menu::after { content: ""; position: absolute; z-index: 1; right: 5px; top: 7px; border: 3px solid transparent; border-top: 4px solid #111; border-bottom: 0; pointer-events: none; }
.menu select { border: 1px solid #fff; border-right: 2px solid #444; border-bottom: 2px solid #444; background: #e9ebdb; padding-left: 3px; }
.menu::after { right: 6px; top: 5px; border-width: 5px 5px 0; }
.level { width: 119px; }
.level svg { position: absolute; left: 3px; top: 2px; width: 14px; height: 14px; }
.level svg + select { padding-left: 24px; }
.short { width: 95px; }
.viewno { width: 29px; margin-right: 2px; }
.check { appearance: none; width: 12px; height: 12px; border: 1px solid #999; border-top-color: #555; border-left-color: #555; background: #fff; position: relative; flex: none; }
.check:checked::after { content: ""; position: absolute; left: 3px; top: 0; width: 4px; height: 7px; border: solid #111; border-width: 0 2px 2px 0; transform: rotate(40deg); }
.text { width: 60px; height: 15px; padding: 0 3px; border: 1px solid #fff; border-top: 2px solid #333; border-left: 2px solid #333; background: #fff; }
.push { height: 18px; border: 1px solid #fff; border-right: 2px solid #333; border-bottom: 2px solid #333; }
.push:disabled { color: #b4b6a8; text-shadow: 1px 1px #fff; }

/* Work area */
main { display: flex; flex: 1; min-height: 400px; }
.toolbox { display: grid; align-content: start; flex: none; }
.left { width: 58px; grid-template-columns: 26px 26px; padding: 7px 2px; border-right: 1px solid #222; background: linear-gradient(#333, #333) 0 140px / 100% 1px no-repeat; }
.right { width: 31px; padding: 6px 2px 6px 3px; border-left: 1px solid #222; background: linear-gradient(#333, #333) 0 377px / 100% 1px no-repeat; }
.right .on { background: #8c8c88; border: 1px solid #333; }
.letter { font: bold 18px/24px "Liberation Serif", serif; color: #a02020; }
.letter svg { align-self: flex-end; }
.workspace { position: relative; flex: 1; min-width: 0; display: flex; padding: 2px 1px 1px; background: #6c6c68; }

.view { flex: 1; min-width: 0; display: grid; grid-template-columns: 1fr 16px; grid-template-rows: 28px 1fr 17px; border: 3px solid #6c78d8; border-top: 0; border-radius: 7px 7px 0 0; background: #e9ebdb; }
.view .titlebar { grid-column: 1 / 3; height: 28px; margin: 0 -3px; padding: 2px 5px 0; border-radius: 7px 7px 0 0; }
.drawing { position: relative; background: #000; overflow: hidden; }
.drawing svg { position: absolute; width: 100%; height: 100%; fill: none; stroke-width: 1; }
.white { stroke: #c4c4c4; }
.teal { stroke: #38a898; }
.green { stroke: #309838; }
.dash { stroke-dasharray: 12 4 3 4; }
.red { stroke: #a01c20; }
.olive { stroke: #788820; }
.yellow { stroke: #c0c860; }
.orange { stroke: #b06830; }
.drawing .blue { stroke: #0000f0; stroke-width: 3; }
.brown { stroke: #8c5830; }
.road { stroke: #fff4e8; stroke-width: 2; }
.building { stroke: #f4ece4; stroke-width: 1.5; }
.vscroll { display: flex; flex-direction: column; background: #d2d2d2; }
.vscroll .thumb { height: 28px; margin: auto 0 217px; }
.hscroll { grid-column: 1 / 3; display: flex; background: #d2d2d2; padding-right: 16px; }
.viewtools { display: flex; align-items: center; background: #f0f0e4; }
.viewtools button { width: 14px; height: 16px; display: flex; align-items: center; justify-content: center; }
.hscroll .thumb { width: 40px; margin: 0 320px 0 auto; }
.thumb { background: #e9ebdb; border: 1px solid #fff; border-right: 2px solid #444; border-bottom: 2px solid #444; }
.sb { width: 16px; height: 16px; display: flex; align-items: center; justify-content: center; background: #e9ebdb; border: 1px solid #fff; border-right-color: #333; border-bottom-color: #333; flex: none; }
.sb::after { content: ""; border: 4px solid transparent; }
.up::after { border-bottom-color: #111; border-top: 0; }
.down::after { border-top-color: #111; border-bottom: 0; }
.prev::after { border-right-color: #111; border-left: 0; }
.next::after { border-left-color: #111; border-right: 0; }

/* Floating windows */
.window { position: absolute; border: 3px solid #0a3cd0; border-top: 0; border-radius: 7px 7px 0 0; background: #e9ebdb; }
.window .titlebar { margin: 0 -3px; padding: 2px 5px 0; border-radius: 7px 7px 0 0; }
.channel { left: 105px; top: 44px; width: 475px; height: 274px; }
.channel .titlebar { height: 27px; }
.channel-body { display: flex; gap: 8px; padding: 7px 12px 0 7px; }
.wizard { width: 132px; flex: none; }
.frame { height: 184px; padding: 4px; border: 1px solid #c4c6b8; }
.frame svg { width: 122px; height: 175px; background: #000; }
.nav { display: grid; grid-template-columns: 59px 59px; gap: 4px 8px; padding: 5px 3px; }
.options { flex: 1; }
.centerline { display: flex; gap: 4px; height: 158px; margin: -6px 0 0; padding: 7px 12px 0 10px; border: 1px solid #c4c6b8; }
.centerline legend { padding: 0 3px; margin-left: -5px; }
.methods { display: grid; grid-template-columns: 34px 34px; grid-auto-rows: 34px; align-self: start; padding: 1px; border: 1px solid #c4c6b8; }
.methods button { display: flex; align-items: center; justify-content: center; border: 1px solid #fff; border-right: 2px solid #333; border-bottom: 2px solid #333; }
.methods .on { background: #9c9c98; border: 1px solid #fff; border-top-color: #444; border-left-color: #444; }
.fields { display: grid; grid-template-columns: 96px 107px; gap: 2px 5px; align-content: start; align-items: center; padding-top: 13px; }
.offset { display: flex; align-items: center; gap: 7px; padding-left: 5px; white-space: nowrap; }
.small { width: 11px; height: 11px; }
.end { text-align: right; white-space: nowrap; padding-right: 5px; }
.selectbox { width: 170px; height: 73px; margin-top: 6px; padding: 3px 5px; border: 1px solid #c4c6b8; }
.selectbox p { line-height: 12px; }
.pickers { display: flex; align-items: center; gap: 5px; margin-top: 7px; padding-left: 1px; }
.pick { width: 31px; height: 31px; border: 1px solid #222; flex: none; }
.raised { box-shadow: 1px 1px #555; }
.color { width: 45px; }
.color select { height: 19px; color: transparent; border: 1px dotted #222; border-right: 2px solid #333; border-bottom: 2px solid #333; }
.color i { position: absolute; z-index: 1; left: 5px; top: 4px; width: 23px; height: 10px; background: #ffff00; }
.pointer { position: absolute; left: 183px; top: 248px; }

.selector { right: 22px; bottom: 22px; width: 189px; height: 117px; border-color: #7480dc; }
.selector .titlebar { height: 28px; }
.selector-body { display: grid; grid-template-columns: 40px 1fr; gap: 3px 4px; justify-items: start; align-items: center; padding: 6px; }
.group { display: flex; gap: 2px; padding: 1px; border: 1px solid #c4c6b8; box-shadow: inset 1px 1px #fff; }
.group button { width: 21px; height: 21px; display: flex; align-items: center; justify-content: center; }
.group .on { background: #8c8c88; border: 1px solid #333; }
.expand { grid-column: 1 / 3; justify-self: end; width: 13px; height: 22px; }

/* Bottom bars */
.groups { height: 32px; border-top: 1px solid #444; border-bottom: 1px solid #333; }
.groups .toolbar { height: 30px; border-bottom: 0; }
.viewgroups { padding-left: 8px; width: 274px; }
.viewgroups .sep { margin-left: 4px; }
.viewgroups .manage { width: 24px; }
.views { display: flex; }
.views button { width: 13px; height: 19px; border: 1px solid #fff; border-right-color: #333; font-size: 12px; }
.views .on { background: #3c68c0; color: #fff; border-color: #234; }
.status { display: flex; align-items: center; height: 23px; padding-right: 3px; flex: none; }
.status .message { width: 375px; padding-left: 3px; border-right: 1px solid #c4c6b8; flex: none; }
.status .cell { width: 24px; height: 19px; display: flex; align-items: center; border-left: 1px solid #c4c6b8; border-top: 1px solid #c4c6b8; flex: none; }
.status .info { flex: 1; min-width: 0; white-space: nowrap; }
.status .snap { width: 28px; padding-left: 3px; }
.status .lock { padding-left: 3px; }
.status .active { width: 106px; }
.status .count { width: 93px; gap: 8px; padding-left: 6px; }
```
